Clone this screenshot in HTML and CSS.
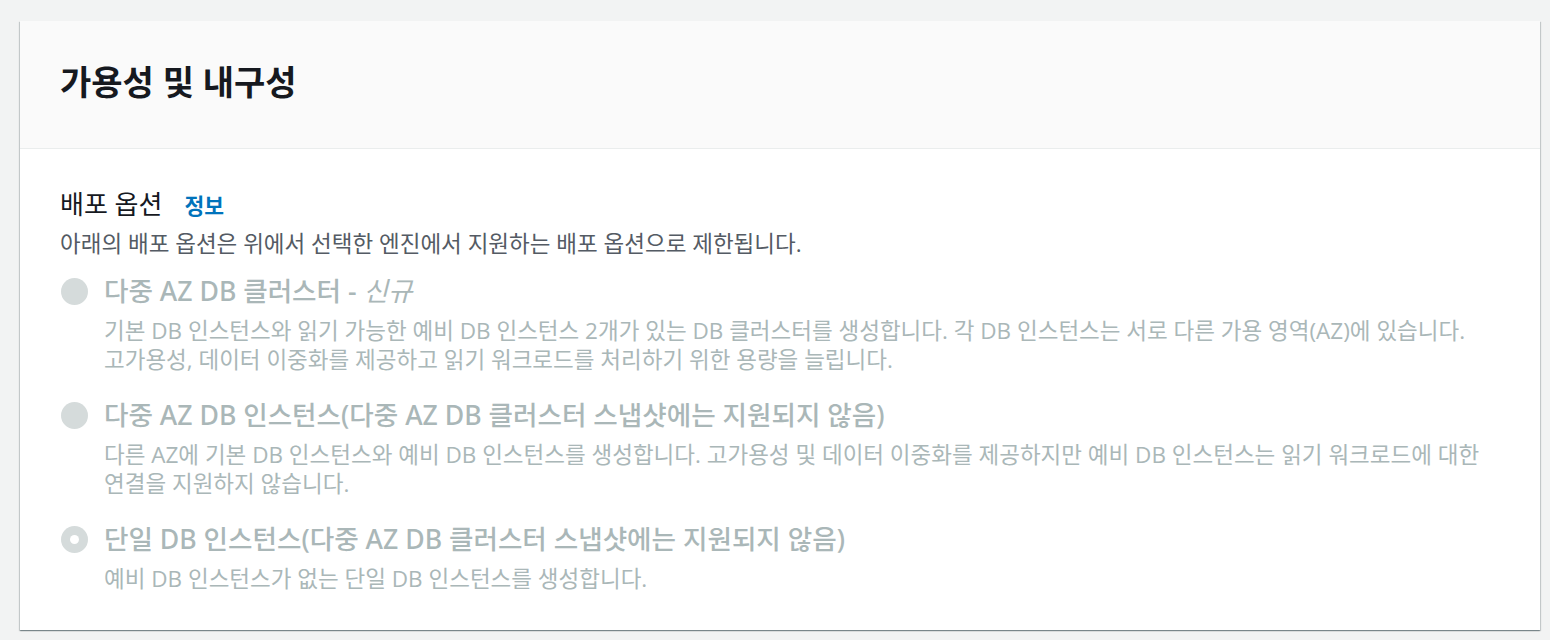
FILE: index.html
```html
<!DOCTYPE html>
<html lang="ko">
<head>
<meta charset="utf-8">
<link rel="stylesheet" href="styles.css">
</head>
<body>
<div class="page">
  <section class="card">
    <header class="card-header">
      <h2 class="card-title">가용성 및 내구성</h2>
    </header>
    <div class="card-body">
      <div class="field-label">
        <span class="label-text">배포 옵션</span>
        <a class="info-link">정보</a>
      </div>
      <p class="field-desc">아래의 배포 옵션은 위에서 선택한 엔진에서 지원하는 배포 옵션으로 제한됩니다.</p>
      <div class="radio-group">
        <div class="radio-item">
          <span class="radio"></span>
          <div class="radio-content">
            <div class="radio-label">다중 AZ DB 클러스터 - <em class="new">신규</em></div>
            <div class="radio-desc">기본 DB 인스턴스와 읽기 가능한 예비 DB 인스턴스 2개가 있는 DB 클러스터를 생성합니다. 각 DB 인스턴스는 서로 다른 가용 영역(AZ)에 있습니다. 고가용성, 데이터 이중화를 제공하고 읽기 워크로드를 처리하기 위한 용량을 늘립니다.</div>
          </div>
        </div>
        <div class="radio-item">
          <span class="radio"></span>
          <div class="radio-content">
            <div class="radio-label">다중 AZ DB 인스턴스(다중 AZ DB 클러스터 스냅샷에는 지원되지 않음)</div>
            <div class="radio-desc">다른 AZ에 기본 DB 인스턴스와 예비 DB 인스턴스를 생성합니다. 고가용성 및 데이터 이중화를 제공하지만 예비 DB 인스턴스는 읽기 워크로드에 대한 연결을 지원하지 않습니다.</div>
          </div>
        </div>
        <div class="radio-item">
          <span class="radio checked"></span>
          <div class="radio-content">
            <div class="radio-label">단일 DB 인스턴스(다중 AZ DB 클러스터 스냅샷에는 지원되지 않음)</div>
            <div class="radio-desc">예비 DB 인스턴스가 없는 단일 DB 인스턴스를 생성합니다.</div>
          </div>
        </div>
      </div>
    </div>
  </section>
</div>
</body>
</html>
```
FILE: styles.css
```css
html, body {
  margin: 0;
  padding: 0;
  background: #f2f3f3;
}
body {
  font-family: "Open Sans", "Noto Sans CJK KR", sans-serif;
  color: #16191f;
  word-break: keep-all;
}
.page {
  padding: 21px 10px 10px 20px;
}
.card {
  background: #ffffff;
  box-shadow: 0 1px 1px 0 rgba(0, 28, 36, 0.3), 1px 1px 1px 0 rgba(0, 28, 36, 0.15), -1px 1px 1px 0 rgba(0, 28, 36, 0.15);
}
.card-header {
  background: #fafafa;
  border-bottom: 1px solid #eaeded;
  box-sizing: border-box;
  height: 128px;
  display: flex;
  align-items: center;
  padding: 0 40px 6px 40px;
}
.card-title {
  margin: 0;
  font-size: 34px;
  font-weight: 700;
  line-height: 44px;
  color: #16191f;
}
.card-body {
  padding: 38px 40px 37px 40px;
}
.field-label {
  display: flex;
  align-items: baseline;
  gap: 22px;
  font-size: 26px;
  line-height: 34px;
}
.label-text {
  color: #16191f;
}
.info-link {
  color: #0073bb;
  font-weight: 700;
  font-size: 21.5px;
}
.field-desc {
  margin: 6px 0 0 0;
  font-size: 22.5px;
  line-height: 29px;
  color: #545b64;
}
.radio-group {
  display: flex;
  flex-direction: column;
  gap: 24px;
  margin-top: 16px;
}
.radio-item {
  display: flex;
  gap: 16px;
  align-items: flex-start;
}
.radio {
  flex: none;
  width: 27px;
  height: 27px;
  border-radius: 50%;
  background: #d5dbdb;
  margin-top: 4px;
  margin-left: 1px;
  display: flex;
  align-items: center;
  justify-content: center;
}
.radio.checked::after {
  content: "";
  width: 9px;
  height: 9px;
  border-radius: 50%;
  background: #ffffff;
}
.radio-content {
  color: #aab7b8;
}
.radio-label {
  font-family: "Noto Sans", "Noto Sans CJK KR", sans-serif;
  font-size: 26.6px;
  line-height: 34px;
  font-weight: 500;
}
.new {
  font-weight: 400;
  font-style: italic;
}
.radio-desc {
  font-size: 22.5px;
  line-height: 29px;
  margin-top: 8px;
}
```
